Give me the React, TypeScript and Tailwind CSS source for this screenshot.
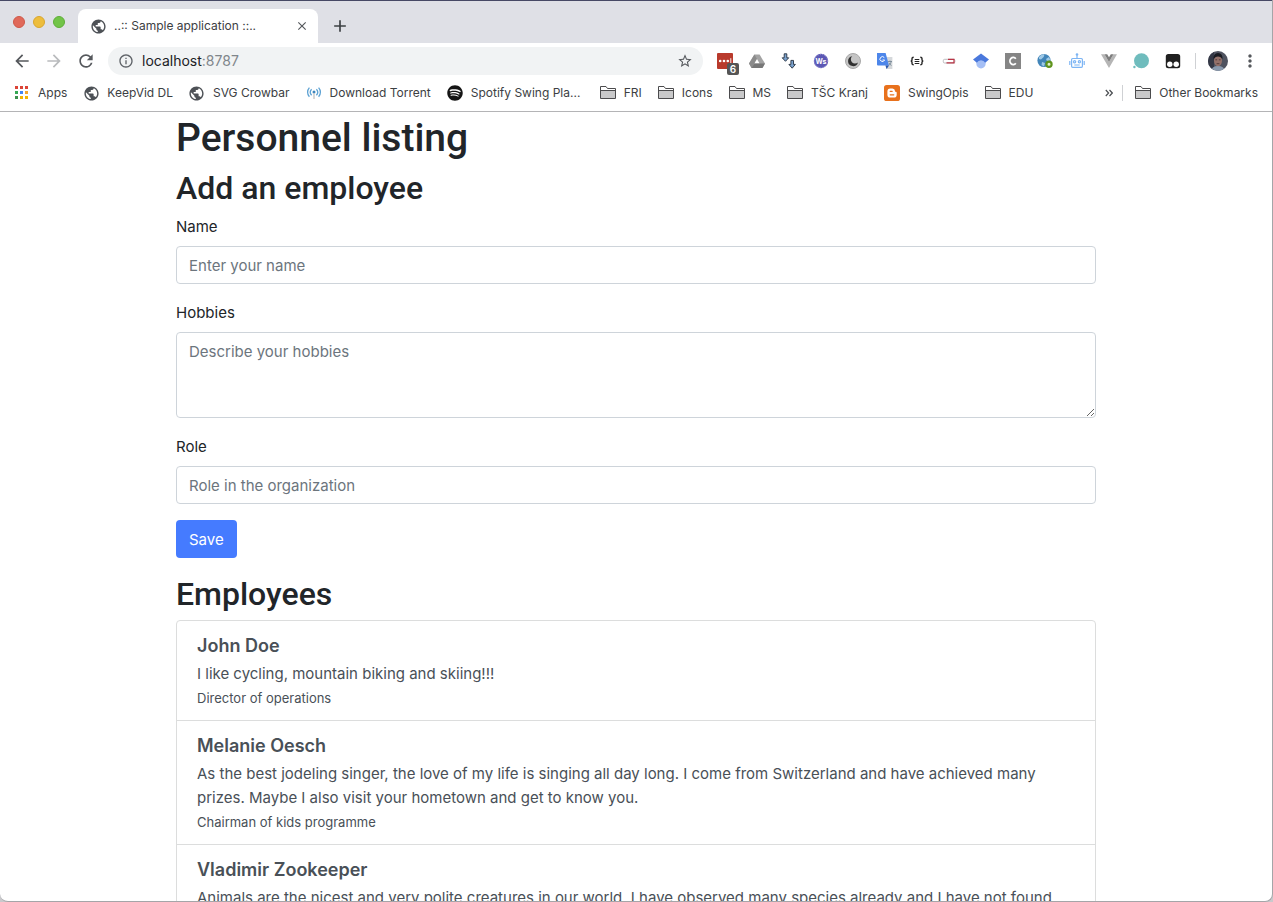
import type { ReactNode } from "react";
import {
  MdAdd,
  MdArrowBack,
  MdArrowForward,
  MdClose,
  MdInfoOutline,
  MdMoreVert,
  MdPublic,
  MdRefresh,
  MdStarBorder,
} from "react-icons/md";
import { FaSpotify } from "react-icons/fa";

function Svg({ children, className = "size-4" }: { children: ReactNode; className?: string }) {
  return (
    <svg viewBox="0 0 16 16" className={`${className} shrink-0`} aria-hidden="true">
      {children}
    </svg>
  );
}

const Globe = () => (
  <span className="flex size-4 shrink-0 items-center justify-center">
    <MdPublic className="size-[17px] shrink-0 text-[#4d5156]" />
  </span>
);

const AppsGrid = () => (
  <Svg>
    {["#db4437", "#db4437", "#db4437", "#34a853", "#4285f4", "#f4a52c", "#3c8f4d", "#f4b400", "#f4b400"].map((c, i) => (
      <rect key={i} x={1 + (i % 3) * 5} y={1 + Math.floor(i / 3) * 5} width="3" height="3" fill={c} />
    ))}
  </Svg>
);

const Antenna = () => (
  <Svg>
    <g fill="none" stroke="#5da2d3" strokeWidth="1.3">
      <path d="M3.4 2.6a6.8 6.8 0 0 0 0 9.2M12.6 2.6a6.8 6.8 0 0 1 0 9.2M5.6 4.2a4.4 4.4 0 0 0 0 6M10.4 4.2a4.4 4.4 0 0 1 0 6" />
    </g>
    <circle cx="8" cy="7" r="1.5" fill="#3d86bd" />
    <path d="M8 8v6" stroke="#c6c6c6" strokeWidth="1.4" />
  </Svg>
);

const Folder = () => (
  <Svg>
    <path d="M.5 13.5V1.5h5.5l1.5 2h8v10z" fill="#fff" stroke="#4b4b4d" />
    <path d="M1 6h14v7H1z" fill="#c9c9ca" />
    <path d="M.5 5.5h15" stroke="#4b4b4d" />
  </Svg>
);

const Blogger = () => (
  <Svg>
    <rect width="16" height="16" rx="2.6" fill="#e8711c" />
    <path
      d="M6.3 3.4h2.1a2.6 2.6 0 0 1 2.6 2.5c0 .7.2.9.8.9.6 0 .9.3.9.9v2a2.9 2.9 0 0 1-2.9 2.9H6.3a2.9 2.9 0 0 1-2.9-2.9V6.3a2.9 2.9 0 0 1 2.9-2.9z"
      fill="#fff"
    />
    <path d="M6.2 6.3h2M6.2 9.8h3.6" stroke="#e8711c" strokeWidth="1.2" strokeLinecap="round" />
  </Svg>
);

const bookmarks: { label: string; icon: ReactNode; width?: string }[] = [
  { label: "Apps", icon: <AppsGrid /> },
  { label: "KeepVid DL", icon: <Globe /> },
  { label: "SVG Crowbar", icon: <Globe /> },
  { label: "Download Torrent", icon: <Antenna /> },
  {
    label: "Spotify Swing Pla...",
    icon: <FaSpotify className="size-4 shrink-0 text-[#151515]" />,
    width: "w-[137px]",
  },
  { label: "FRI", icon: <Folder /> },
  { label: "Icons", icon: <Folder /> },
  { label: "MS", icon: <Folder /> },
  { label: "TŠC Kranj", icon: <Folder /> },
  { label: "SwingOpis", icon: <Blogger /> },
  { label: "EDU", icon: <Folder /> },
];

const extensions: { name: string; icon: ReactNode }[] = [
  {
    name: "Passwords",
    icon: (
      <span className="relative block size-4">
        <Svg>
          <rect width="16" height="16" rx="1" fill="#b93a2c" />
          <circle cx="3.2" cy="8" r="1.3" fill="#fff" />
          <circle cx="7" cy="8" r="1.3" fill="#fff" />
          <circle cx="10.8" cy="8" r="1.3" fill="#fff" />
          <path d="M13.8 5.2v5.6" stroke="#fff" strokeWidth=".9" />
        </Svg>
        <span className="absolute top-2.5 left-2.5 flex h-3 w-3 items-center justify-center rounded-xs bg-[#555] text-[10px] leading-3 font-semibold text-white">
          6
        </span>
      </span>
    ),
  },
  {
    name: "Drive",
    icon: (
      <Svg>
        <path d="M5.4 1.4h5.2L16 10.6 13.4 15H2.6L0 10.6z" fill="#a3a3a3" />
        <path d="M5.4 1.4 0 10.6 2.6 15 8 5.9z" fill="#8b8b8b" />
        <path d="M5.4 10.5h5.2L8 6z" fill="#fff" />
        <path d="M5.4 10.5H16L13.4 15H2.6z" fill="#777" />
      </Svg>
    ),
  },
  {
    name: "Downloader",
    icon: (
      <Svg>
        <g fill="#7ba3cf" stroke="#25303f" strokeWidth=".9">
          <path d="M3.2.8h2.6v4h1.9L4.5 8.3 1.2 4.8h2z" />
          <path d="M9.9 7.4h2.6v4h1.9l-3.2 3.8-3.3-3.8h2z" />
        </g>
      </Svg>
    ),
  },
  {
    name: "Web sockets",
    icon: (
      <Svg>
        <circle cx="8" cy="8" r="7.2" fill="#5b57b4" />
        <circle cx="8" cy="8" r="6.6" fill="none" stroke="#9a98d5" strokeDasharray="1 1" />
        <text x="8" y="10.6" textAnchor="middle" fontSize="7" fontWeight="700" fill="#fff" fontFamily="Inter, sans-serif">
          Ws
        </text>
      </Svg>
    ),
  },
  {
    name: "Dark mode",
    icon: (
      <Svg>
        <circle cx="8" cy="8" r="7.5" fill="#c5c5c5" stroke="#a8a8a8" />
        <path d="M7.2 3.2a5 5 0 1 0 5.7 6.2 4 4 0 0 1-5.7-6.2z" fill="#303030" />
      </Svg>
    ),
  },
  {
    name: "Translate",
    icon: (
      <Svg>
        <path d="M6 4h9.4v12H9.6z" fill="#d5d8db" />
        <path d="M0 0h8.6l3.4 12.5H1A1 1 0 0 1 0 11.5z" fill="#4d86ea" />
        <path d="M9.6 16 8.5 12.5H12z" fill="#2855ab" />
        <path d="M7.3 4.6A2.4 2.4 0 1 0 7.6 7H5.5" fill="none" stroke="#fff" />
        <path d="M11 8.5h4M13 7.5v1M14.3 8.5q-.6 2.5-2.4 4M12 9.8q1 2 2.5 2.7" fill="none" stroke="#6f8192" strokeWidth=".8" />
      </Svg>
    ),
  },
  {
    name: "JSON viewer",
    icon: (
      <Svg>
        <g fill="none" stroke="#252525" strokeWidth="1.4">
          <path d="M4.7 4.2q-1.7 0-1.7 1.3v1.3Q3 8 1.7 8 3 8 3 9.2v1.3q0 1.3 1.7 1.3" />
          <path d="M11.3 4.2q1.7 0 1.7 1.3v1.3Q13 8 14.3 8 13 8 13 9.2v1.3q0 1.3-1.7 1.3" />
          <path d="M5.7 6.5h4.6M5.7 8.5h4.6M5.7 10.5h4.6" strokeWidth="1" />
        </g>
      </Svg>
    ),
  },
  {
    name: "Recorder",
    icon: (
      <Svg>
        <rect x="2.3" y="6.3" width="11.6" height="3.7" rx="1.3" fill="#fff" stroke="#b5b5b9" strokeWidth=".9" />
        <path d="M7 6.3h6v3.5H5.5" fill="none" stroke="#b93445" strokeWidth="1.2" />
      </Svg>
    ),
  },
  {
    name: "Scholar",
    icon: (
      <Svg>
        <circle cx="8" cy="10.8" r="4.7" fill="#a5bff5" />
        <path d="M8 .5 16 6.5l-3.8 3.2A4.8 4.8 0 0 0 8 7.2a4.8 4.8 0 0 0-4.2 2.5L0 6.5z" fill="#4a78dc" />
      </Svg>
    ),
  },
  {
    name: "Clipper",
    icon: (
      <Svg>
        <rect width="16" height="16" fill="#858585" />
        <path d="M10.8 5.7A3.3 3.6 0 1 0 10.8 10.3" fill="none" stroke="#fff" strokeWidth="1.8" />
      </Svg>
    ),
  },
  {
    name: "World",
    icon: (
      <Svg>
        <circle cx="7" cy="7.5" r="6.6" fill="#4285b9" />
        <path d="M2 4q3-3.5 5.5-2.5L6.7 4 4 6.5 2 6zM9 6l3-2 1.3 3-2.8 2zM5 9l3 1-1 3.5L4.5 12z" fill="#9fc9e6" />
        <circle cx="12" cy="11.3" r="2.6" fill="#e4efcf" stroke="#5f941d" strokeWidth="2.2" />
      </Svg>
    ),
  },
  {
    name: "Robot",
    icon: (
      <Svg>
        <g fill="none" stroke="#7db5f4" strokeWidth="1.2">
          <rect x="2.6" y="5.5" width="10.8" height="8.8" rx="1" />
          <path d="M8 2.5v3M.8 8v4M15.2 8v4M5.3 12h5.4" />
          <circle cx="5.6" cy="8.7" r="1.1" />
          <circle cx="10.4" cy="8.7" r="1.1" />
        </g>
        <circle cx="8" cy="1.6" r="1.3" fill="#7db5f4" />
      </Svg>
    ),
  },
  {
    name: "Vue",
    icon: (
      <Svg>
        <path d="M0 1.2h3.5L8 9l4.5-7.8H16L8 15z" fill="#b5b5b5" />
        <path d="M3.5 1.2h2.7L8 4.3l1.8-3.1h2.7L8 9z" fill="#7d7d7d" />
      </Svg>
    ),
  },
  {
    name: "Status",
    icon: (
      <Svg>
        <circle cx="8.5" cy="7.8" r="7.5" fill="#6fbcbd" />
        <circle cx="1.4" cy="14" r="1.2" fill="#6fbcbd" />
      </Svg>
    ),
  },
  {
    name: "Scripts",
    icon: (
      <Svg>
        <rect x=".8" y="1" width="14.4" height="14.2" rx="2.5" fill="#202020" />
        <circle cx="4.8" cy="11.2" r="2.7" fill="#fff" />
        <circle cx="11.2" cy="11.2" r="2.7" fill="#fff" />
      </Svg>
    ),
  },
];

const employees = [
  {
    name: "John Doe",
    hobbies: "I like cycling, mountain biking and skiing!!!",
    role: "Director of operations",
  },
  {
    name: "Melanie Oesch",
    hobbies:
      "As the best jodeling singer, the love of my life is singing all day long. I come from Switzerland and have achieved many prizes. Maybe I also visit your hometown and get to know you.",
    role: "Chairman of kids programme",
  },
  {
    name: "Vladimir Zookeeper",
    hobbies:
      "Animals are the nicest and very polite creatures in our world. I have observed many species already and I have not found",
    role: "",
  },
];

function TabStrip() {
  return (
    <div className="flex h-[43px] items-end border-t border-[#474965] bg-[#dfe0e6]">
      <div className="flex w-[78px] gap-2 self-start pt-[15px] pl-[13px]">
        <span className="size-3 rounded-full border border-[#cf5848] bg-[#e0695a]" />
        <span className="size-3 rounded-full border border-[#d9a62e] bg-[#edbd3c]" />
        <span className="size-3 rounded-full border border-[#5fae38] bg-[#72c448]" />
      </div>
      <div className="flex h-[34px] w-60 items-center rounded-t-lg bg-white pr-[9px] pl-3">
        <Globe />
        <span className="ml-2 flex-1 text-xs text-[#3c4043]">..:: Sample application ::..</span>
        <button type="button" aria-label="Close tab">
          <MdClose className="size-3.5 text-[#55585c]" />
        </button>
      </div>
      <button type="button" aria-label="New tab" className="ml-3 flex h-[34px] items-center">
        <MdAdd className="size-5 text-[#3c4043]" />
      </button>
    </div>
  );
}

function Toolbar() {
  return (
    <div className="flex h-9 items-center px-3">
      <div className="flex w-24 gap-3">
        <button type="button" aria-label="Back">
          <MdArrowBack className="size-5 text-[#55585c]" />
        </button>
        <button type="button" aria-label="Forward">
          <MdArrowForward className="size-5 text-[#b9bbbd]" />
        </button>
        <button type="button" aria-label="Reload">
          <MdRefresh className="size-5 text-[#55585c]" />
        </button>
      </div>
      <div className="flex h-7 flex-1 items-center rounded-full bg-[#f1f3f4] px-2.5">
        <MdInfoOutline className="size-4 text-[#5f6368]" />
        <span className="ml-2 flex-1 text-sm text-[#202124]">
          localhost<span className="text-[#80868b]">:8787</span>
        </span>
        <button type="button" aria-label="Bookmark this page">
          <MdStarBorder className="size-4 text-[#55585c]" />
        </button>
      </div>
      <div className="ml-3.5 flex gap-4">
        {extensions.map((e) => (
          <button key={e.name} type="button" aria-label={e.name} className="size-4">
            {e.icon}
          </button>
        ))}
      </div>
      <span className="ml-3.5 h-4 w-px bg-[#cfd1d4]" />
      <button type="button" aria-label="Profile" className="ml-3">
        <svg viewBox="0 0 20 20" className="size-5 rounded-full" aria-hidden="true">
          <rect width="20" height="20" fill="#4f5360" />
          <path d="M0 0h6v20H0z" fill="#343846" />
          <path d="M3 20q1-5 7-5t7 5z" fill="#8a9aae" />
          <ellipse cx="10" cy="9.5" rx="4" ry="5.7" fill="#94716a" />
          <path d="M5.6 8.5Q5 2 10 2t4.4 6.5Q13 5.5 10 5.5T5.6 8.5z" fill="#191b22" />
          <path d="M7.4 8.8h1.7M10.9 8.8h1.7M8.6 12.7h2.8" stroke="#42302f" strokeWidth=".8" />
        </svg>
      </button>
      <button type="button" aria-label="Menu" className="ml-3">
        <MdMoreVert className="size-5 text-[#55585c]" />
      </button>
    </div>
  );
}

function BookmarksBar() {
  return (
    <nav className="flex h-[33px] items-center justify-between border-b border-[#b4b4b6] px-3.5 pb-1 text-xs text-[#3c4043]">
      <div className="flex gap-4">
        {bookmarks.map((b) => (
          <a key={b.label} href="#" className={`flex items-center gap-2 whitespace-nowrap ${b.width ?? ""}`}>
            {b.icon}
            {b.label}
          </a>
        ))}
      </div>
      <div className="flex items-center">
        <button type="button" aria-label="More bookmarks">
          <svg viewBox="0 0 8 8" className="size-2" aria-hidden="true">
            <path d="M.8 1 3.6 4 .8 7M4.5 1l2.8 3-2.8 3" fill="none" stroke="#4b4e52" strokeWidth="1.2" />
          </svg>
        </button>
        <span className="mr-3 ml-[9px] h-4 w-px bg-[#cfd1d4]" />
        <a href="#" className="flex items-center gap-2 whitespace-nowrap">
          <Folder />
          Other Bookmarks
        </a>
      </div>
    </nav>
  );
}

const control =
  "block w-full rounded border border-[#ced4da] bg-white px-3 pt-[7px] pb-[5px] text-[15px] leading-6 text-[#495057] placeholder:text-[#6c757d]";

const label = "mb-[7px] block";

const heading = "font-['Roboto','Liberation_Sans',sans-serif] font-medium";

export default function App() {
  return (
    <div className="bg-[#c9c9cc] font-['Inter','Liberation_Sans',sans-serif]">
      <div className="flex h-screen flex-col overflow-hidden rounded-b-lg border-r border-b border-[#a5a5a8] bg-white">
        <header className="shrink-0">
          <TabStrip />
          <Toolbar />
          <BookmarksBar />
        </header>
        <main className="min-h-0 flex-1 overflow-hidden text-[15px] leading-6 text-[#212529]">
          <div className="mx-auto max-w-[920px]">
            <h1 className={`${heading} mb-1 text-[39px] leading-[52px]`}>Personnel listing</h1>
            <h2 className={`${heading} mb-[7px] text-[32px] leading-10`}>Add an employee</h2>
            <form onSubmit={(e) => e.preventDefault()}>
              <div className="mb-[17px]">
                <label htmlFor="name" className={label}>
                  Name
                </label>
                <input id="name" type="text" placeholder="Enter your name" className={control} />
              </div>
              <div className="mb-[17px]">
                <label htmlFor="hobbies" className={label}>
                  Hobbies
                </label>
                <textarea id="hobbies" rows={3} placeholder="Describe your hobbies" className={control} />
              </div>
              <div className="mb-4">
                <label htmlFor="role" className={label}>
                  Role
                </label>
                <input id="role" type="text" placeholder="Role in the organization" className={control} />
              </div>
              <button type="submit" className="rounded bg-[#457bff] px-[13px] pt-2 pb-[6px] text-white">
                Save
              </button>
            </form>
            <h2 className={`${heading} mt-4 mb-[6px] text-[32px] leading-10`}>Employees</h2>
            <ul className="divide-y divide-[#dcdddd] rounded border border-[#dcdddd] text-[#495057]">
              {employees.map((e) => (
                <li key={e.name} className="px-5 pt-[13px] pb-[11px]">
                  <h5 className="mb-1 text-lg leading-6 font-semibold">{e.name}</h5>
                  <p>{e.hobbies}</p>
                  <small className="mt-0.5 block text-[13px] leading-[21px]">{e.role}</small>
                </li>
              ))}
            </ul>
          </div>
        </main>
      </div>
    </div>
  );
}
